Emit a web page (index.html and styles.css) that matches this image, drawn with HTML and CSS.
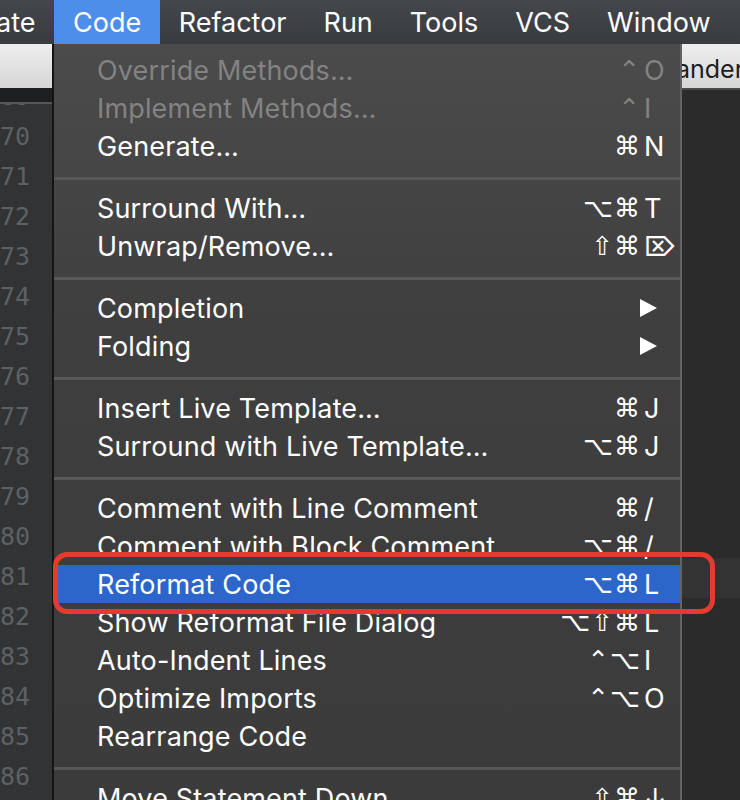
FILE: index.html
```html
<!DOCTYPE html>
<html>
<head>
<meta charset="utf-8">
<title>Code menu</title>
<link rel="stylesheet" href="styles.css">
</head>
<body>
<div class="screen">
  <nav class="menubar">
    <div class="mb-clip"><span class="mb-item">Navigate</span></div>
    <span class="mb-item active">Code</span>
    <span class="mb-item">Refactor</span>
    <span class="mb-item">Run</span>
    <span class="mb-item">Tools</span>
    <span class="mb-item">VCS</span>
    <span class="mb-item">Window</span>
  </nav>

  <div class="workspace">
    <div class="tabs">
      <div class="tab-label">ander</div>
    </div>
    <div class="editor">
      <div class="gutter">
        <div class="gutter-strip"></div>
        <div class="gutter-body">
          <div class="lines">
            <div class="ln">69</div><div class="ln">70</div><div class="ln">71</div><div class="ln">72</div>
            <div class="ln">73</div><div class="ln">74</div><div class="ln">75</div><div class="ln">76</div>
            <div class="ln">77</div><div class="ln">78</div><div class="ln">79</div><div class="ln">80</div>
            <div class="ln">81</div><div class="ln">82</div><div class="ln">83</div><div class="ln">84</div>
            <div class="ln">85</div><div class="ln">86</div><div class="ln">87</div>
          </div>
        </div>
      </div>
      <div class="code">
        <div class="code-strip"></div>
        <div class="code-body">
          <div class="rows">
            <div class="row"></div><div class="row"></div><div class="row"></div><div class="row"></div>
            <div class="row"></div><div class="row"></div><div class="row"></div><div class="row"></div>
            <div class="row"></div><div class="row"></div><div class="row"></div><div class="row"></div>
            <div class="row caret"></div><div class="row"></div><div class="row"></div><div class="row"></div>
            <div class="row"></div><div class="row"></div><div class="row"></div>
          </div>
        </div>
      </div>
    </div>

    <div class="dropdown">
      <div class="item disabled"><span class="label">Override Methods…</span><span class="mods">⌃</span><span class="key">O</span></div>
      <div class="item disabled"><span class="label">Implement Methods…</span><span class="mods">⌃</span><span class="key">I</span></div>
      <div class="item"><span class="label">Generate…</span><span class="mods">⌘</span><span class="key">N</span></div>
      <div class="sep"></div>
      <div class="item"><span class="label">Surround With…</span><span class="mods">⌥⌘</span><span class="key">T</span></div>
      <div class="item"><span class="label">Unwrap/Remove…</span><span class="mods">⇧⌘</span><span class="key">⌦</span></div>
      <div class="sep"></div>
      <div class="item"><span class="label">Completion</span><span class="arrow"></span></div>
      <div class="item"><span class="label">Folding</span><span class="arrow"></span></div>
      <div class="sep"></div>
      <div class="item"><span class="label">Insert Live Template…</span><span class="mods">⌘</span><span class="key">J</span></div>
      <div class="item"><span class="label">Surround with Live Template…</span><span class="mods">⌥⌘</span><span class="key">J</span></div>
      <div class="sep"></div>
      <div class="item"><span class="label">Comment with Line Comment</span><span class="mods">⌘</span><span class="key">/</span></div>
      <div class="item"><span class="label">Comment with Block Comment</span><span class="mods">⌥⌘</span><span class="key">/</span></div>
      <div class="item selected"><span class="label">Reformat Code</span><span class="mods">⌥⌘</span><span class="key">L</span></div>
      <div class="item"><span class="label">Show Reformat File Dialog</span><span class="mods">⌥⇧⌘</span><span class="key">L</span></div>
      <div class="item"><span class="label">Auto-Indent Lines</span><span class="mods">⌃⌥</span><span class="key">I</span></div>
      <div class="item"><span class="label">Optimize Imports</span><span class="mods">⌃⌥</span><span class="key">O</span></div>
      <div class="item"><span class="label">Rearrange Code</span></div>
      <div class="sep"></div>
      <div class="item"><span class="label">Move Statement Down</span><span class="mods">⇧⌘</span><span class="key">↓</span></div>
    </div>
  </div>

  <div class="annotation"></div>
</div>
</body>
</html>
```

FILE: styles.css
```css
* { box-sizing: border-box; }

html, body {
  margin: 0;
  padding: 0;
  background: #2b2b2b;
}

.screen {
  position: relative;
  width: 740px;
  height: 800px;
  overflow: hidden;
  font-family: Inter, "Noto Sans", "DejaVu Sans", sans-serif;
}

/* ---------- menu bar ---------- */
.menubar {
  display: flex;
  height: 44px;
  align-items: stretch;
  background: linear-gradient(#43464b, #383b40);
  color: #ffffff;
  font-size: 27px;
  white-space: nowrap;
}

.mb-clip {
  width: 54px;
  flex: none;
  display: flex;
  justify-content: flex-end;
  overflow: hidden;
}

.mb-item {
  display: flex;
  align-items: center;
  padding: 0 18.5px;
  flex: none;
}

.mb-item.active {
  background: #4c8eea;
  padding: 0 19px;
}

/* ---------- workspace ---------- */
.workspace {
  position: relative;
  height: 756px;
}

.tabs {
  height: 44px;
  background: linear-gradient(#eeeeee, #d6d6d6);
  display: flex;
  justify-content: flex-end;
  align-items: center;
  overflow: hidden;
}

.tab-label {
  width: 58px;
  font-size: 25px;
  line-height: 1;
  padding-top: 6px;
  color: #202020;
  white-space: nowrap;
  text-indent: -6px;
}

.editor {
  display: flex;
  height: 712px;
}

.gutter {
  width: 52px;
  flex: none;
  background: #313335;
  display: flex;
  flex-direction: column;
}

.gutter-strip {
  height: 16px;
  flex: none;
  background: #1e1f21;
  border-bottom: 2px solid #555759;
}

.gutter-body {
  flex: 1;
  overflow: hidden;
}

.lines {
  margin-top: -27px;
}

.ln {
  height: 40px;
  line-height: 40px;
  text-align: right;
  padding-right: 34px;
  font-family: "DejaVu Sans Mono", "Liberation Mono", monospace;
  font-size: 25px;
  color: #5d6164;
  white-space: nowrap;
}

.code {
  flex: 1;
  background: #2b2b2b;
  display: flex;
  flex-direction: column;
}

.code-strip {
  height: 2px;
  flex: none;
  background: #4a4a4a;
}

.code-body {
  flex: 1;
  overflow: hidden;
}

.rows {
  margin-top: -12px;
}

.row {
  height: 40px;
}

.row.caret {
  background: #333333;
}

/* ---------- dropdown ---------- */
.dropdown {
  position: absolute;
  left: 52px;
  top: 0;
  width: 630px;
  height: 780px;
  padding-top: 7px;
  background: linear-gradient(#4b4b4b 0%, #3f3f3f 35%, #3b3b3b 100%);
  border-left: 2px solid #151515;
  border-right: 2px solid #626262;
  color: #ffffff;
  font-size: 27px;
  letter-spacing: 0.15px;
}

.item {
  display: flex;
  align-items: center;
  height: 38px;
  padding-left: 43px;
  white-space: nowrap;
}

.item .label {
  flex: 1;
}

.item.disabled {
  color: #838383;
}

.item.selected {
  background: #2c66cb;
}

.mods {
  text-align: right;
  font-family: "DejaVu Sans", sans-serif;
  font-size: 26px;
  letter-spacing: 1px;
}

.key {
  width: 36px;
  margin-left: 3px;
  flex: none;
}

.arrow {
  width: 0;
  height: 0;
  border-left: 17px solid #ffffff;
  border-top: 9px solid transparent;
  border-bottom: 9px solid transparent;
  margin-right: 23px;
}

.sep {
  height: 3px;
  margin: 12px 0 9px;
  background: #585858;
}

/* ---------- annotation ---------- */
.annotation {
  position: absolute;
  left: 53px;
  top: 552px;
  width: 662px;
  height: 62px;
  border: 5px solid #e33b2e;
  border-radius: 14px;
}
```
